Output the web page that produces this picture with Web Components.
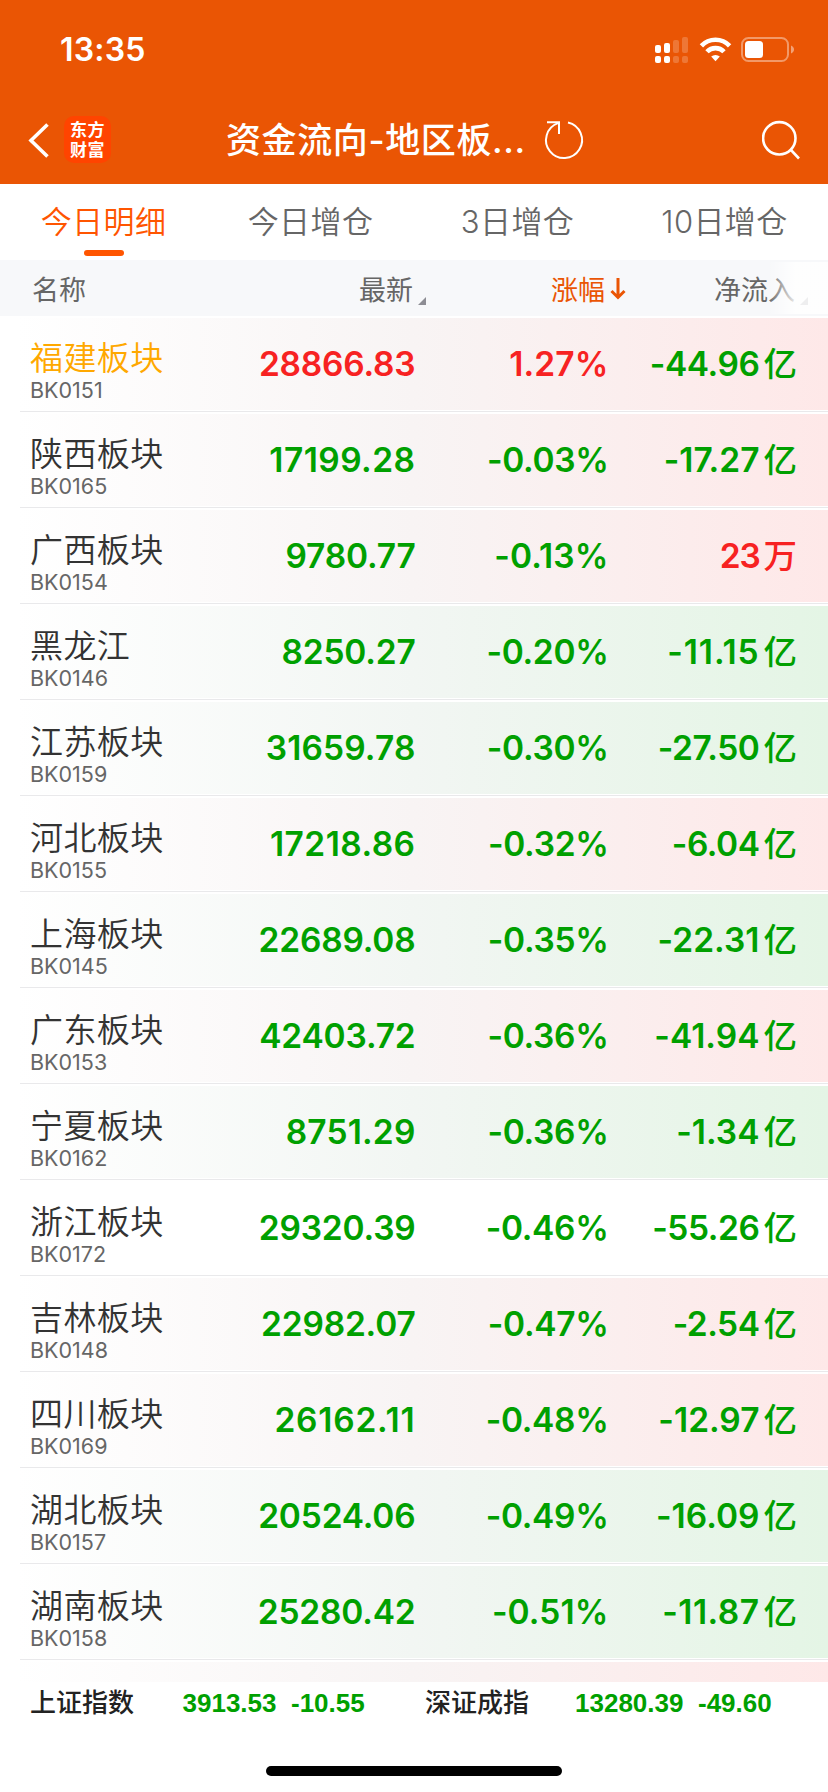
<!DOCTYPE html>
<html lang="zh-CN">
<head>
<meta charset="utf-8">
<title>资金流向</title>
<style>
  body {
    margin: 0;
    width: 828px;
    height: 1792px;
    overflow: hidden;
    background: #fff;
    font-family: Inter, "Noto Sans CJK SC", sans-serif;
  }
</style>
</head>
<body>
<fund-page></fund-page>
<script>
// 根据模板字符串创建 shadow root
function render(el, html) {
  const template = document.createElement('template');
  template.innerHTML = html;
  el.attachShadow({ mode: 'open' }).appendChild(template.content.cloneNode(true));
}

// 状态栏
class StatusBar extends HTMLElement {
  constructor() {
    super();
    render(this, `
      <style>
        :host { display: flex; justify-content: space-between; height: 100px; box-sizing: border-box; padding: 30px 32px 0 60px; color: #fff; }
        .time { font-size: 32px; font-weight: 600; line-height: 40px; letter-spacing: 0.2px; }
        svg { display: block; }
      </style>
      <span class="time">13:35</span>
      <svg width="144" height="40" viewBox="652 30 144 40" fill="#fff">
        <rect x="655" y="45" width="6" height="8" rx="2"/>
        <rect x="664" y="43" width="6" height="10" rx="2"/>
        <rect x="655" y="56" width="6" height="7" rx="2"/>
        <rect x="664" y="56" width="6" height="7" rx="2"/>
        <g opacity="0.2">
          <rect x="673" y="40" width="6" height="13" rx="2"/>
          <rect x="682" y="37" width="6" height="16" rx="2"/>
          <rect x="673" y="56" width="6" height="7" rx="2"/>
          <rect x="682" y="56" width="6" height="7" rx="2"/>
        </g>
        <g fill="none" stroke="#fff" stroke-width="4.6">
          <path d="M701.4 45.8a19.4 19.4 0 0 1 28.2 0"/>
          <path d="M707 51.8a11.6 11.6 0 0 1 17 0"/>
        </g>
        <path d="M711.2 56.6a6.4 6.4 0 0 1 8.6 0l-4.3 4.6z"/>
        <rect x="742" y="38" width="46" height="23" rx="6.5" fill="none" stroke="#fff" stroke-width="2" opacity="0.4"/>
        <rect x="745" y="41" width="18" height="17" rx="3.5"/>
        <path d="M791 45.500c4 1.500 4 6.500 0 8z" opacity="0.45"/>
      </svg>
    `);
  }
}

// 顶部导航
class NavBar extends HTMLElement {
  constructor() {
    super();
    render(this, `
      <style>
        :host { display: grid; grid-template-columns: 64px 162px 311px 225px 1fr; align-items: center; height: 84px; box-sizing: border-box; padding-bottom: 5px; color: #fff; }
        svg { display: block; }
        .logo { width: 47px; height: 47px; border-radius: 10px; background: #ff4400; box-sizing: border-box; padding-top: 5px; font: 700 17px/20px "Liberation Sans", "Noto Sans CJK SC", sans-serif; text-align: center; letter-spacing: 0.5px; }
        .logo div { height: 19.500px; }
        .title { font-size: 35px; font-weight: 500; line-height: 48px; letter-spacing: 0.6px; white-space: nowrap; }
      </style>
      <svg width="64" height="46" viewBox="0 117 64 46"><path d="M47.500 124.500L31 140.500l16.500 16" fill="none" stroke="#fff" stroke-width="3.6"/></svg>
      <div class="logo"><div>东方</div><div>财富</div></div>
      <div class="title"><slot></slot></div>
      <svg width="60" height="46" viewBox="537 117 60 46" fill="none" stroke="#fff" stroke-width="2">
        <path d="M568 122.500A18 18 0 1 1 558 123.100"/>
        <path d="M547 122.200H559V134"/>
      </svg>
      <svg width="46" height="46" viewBox="762 117 46 46" fill="none" stroke="#fff" stroke-width="2.600">
        <circle cx="779.300" cy="138.300" r="16.200"/>
        <path d="M790.500 149.500l8.500 9"/>
      </svg>
    `);
  }
}

class TabItem extends HTMLElement {
  constructor() {
    super();
    render(this, `
      <style>
        :host { display: flex; flex-direction: column; align-items: center; color: #666; }
        .text { font-size: 31px; line-height: 44px; margin-top: 16px; font-weight: 350; letter-spacing: 0.4px; }
        .bar { width: 40px; height: 6px; border-radius: 3px; margin-top: 6px; }
        :host([active]) { color: #ff5500; }
        :host([active]) .bar { background: #ff5500; }
      </style>
      <span class="text"><slot></slot></span>
      <span class="bar"></span>
    `);
  }
}

// 表头
class TableHead extends HTMLElement {
  constructor() {
    super();
    render(this, `
      <style>
        :host { display: grid; grid-template-columns: 32px 327px 192px 163px 1fr; align-items: center; position: relative; height: 56px; background: #f7f8fa; margin-bottom: 2px; color: #666; font-size: 27px; }
        span { display: flex; align-items: center; height: 56px; }
        .tri { margin: 26px 0 0 5px; }
        .sort { color: #ea5504; }
        .sort svg { margin: 1px 0 0 5px; }
        .fade { position: absolute; right: 0; top: 2px; width: 60px; height: 52px; background: linear-gradient(90deg, rgba(255,255,255,0), rgba(255,255,255,0.85) 45%); }
      </style>
      <i></i>
      <span>名称</span>
      <span>最新<svg class="tri" width="8" height="8"><path d="M8 0V8H0z" fill="#8d8d94"/></svg></span>
      <span class="sort">涨幅<svg width="16" height="24"><path d="M8 1V21M1.500 14L8 20.500L14.500 14" fill="none" stroke="#ea5504" stroke-width="3"/></svg></span>
      <span>净流入<svg class="tri" width="8" height="8"><path d="M8 0V8H0z" fill="#8d8d94"/></svg></span>
      <div class="fade"></div>
    `);
  }
}

// 板块行
class BoardRow extends HTMLElement {
  constructor() {
    super();
    render(this, `
      <style>
        :host { display: block; height: 96px; --num: #00a000; }
        .row { display: grid; grid-template-columns: 215px 200.500px 193px 188.500px; height: 92px; }
        .line { height: 1px; margin: 1px 0 2px 20px; background: #e9e9eb; }
        :host([bg=red]) .row { background: linear-gradient(90deg, #fff 2%, #f8f4f4 50%, #fee8e8); }
        :host([bg=green]) .row { background: linear-gradient(90deg, #fff 2%, #f2f6f3 50%, #e4f5e5); }
        .name { padding: 18px 0 0 30px; white-space: nowrap; }
        .title { font-size: 33px; line-height: 44px; letter-spacing: 0.4px; color: #333; font-weight: 350; }
        :host([hot]) .title { color: #ffa800; }
        .code { font-size: 21.500px; line-height: 21px; color: #666; }
        .num { color: var(--num); font-size: 33.500px; font-weight: 580; line-height: 93px; text-align: right; white-space: nowrap; }
        .num.up { color: #f72222; }
        .unit { margin-left: 4px; font-weight: 500; }
      </style>
      <div class="row">
        <div class="name"><div class="title"></div><div class="code"></div></div>
        <div class="num price"></div>
        <div class="num pct"></div>
        <div class="num flow"><span class="val"></span><span class="unit"></span></div>
      </div>
      <div class="line"></div>
    `);
  }

  // 填写数字，数字1较窄，用字距补足宽度
  setNum(selector, text, base) {
    const el = this.shadowRoot.querySelector(selector);
    const ones = text.split('1').length - 1;
    el.textContent = text;
    if (text) el.style.letterSpacing = `${((base + ones * 2.6) / text.length).toFixed(2)}px`;
  }

  // 填充一行的数据
  setData([name, code, price, pct, flow, bg]) {
    const $ = s => this.shadowRoot.querySelector(s);
    if (bg) this.setAttribute('bg', bg);
    $('.title').textContent = name;
    $('.code').textContent = code;
    this.setNum('.price', price, -1.5);
    this.setNum('.pct', pct, -2);
    this.setNum('.val', flow.slice(0, -1), -2.5);
    $('.unit').textContent = flow.slice(-1);
    if (pct && !pct.startsWith('-')) {
      $('.price').classList.add('up');
      $('.pct').classList.add('up');
    }
    if (flow && !flow.startsWith('-')) $('.flow').classList.add('up');
  }
}

class BoardList extends HTMLElement {
  constructor() {
    super();
    render(this, `
      <style>
        :host { display: block; height: 1364px; overflow: hidden; }
      </style>
    `);
    const rows = [
      ['福建板块', 'BK0151', '28866.83', '1.27%', '-44.96亿', 'red'],
      ['陕西板块', 'BK0165', '17199.28', '-0.03%', '-17.27亿', 'red'],
      ['广西板块', 'BK0154', '9780.77', '-0.13%', '23万', 'red'],
      ['黑龙江', 'BK0146', '8250.27', '-0.20%', '-11.15亿', 'green'],
      ['江苏板块', 'BK0159', '31659.78', '-0.30%', '-27.50亿', 'green'],
      ['河北板块', 'BK0155', '17218.86', '-0.32%', '-6.04亿', 'red'],
      ['上海板块', 'BK0145', '22689.08', '-0.35%', '-22.31亿', 'green'],
      ['广东板块', 'BK0153', '42403.72', '-0.36%', '-41.94亿', 'red'],
      ['宁夏板块', 'BK0162', '8751.29', '-0.36%', '-1.34亿', 'green'],
      ['浙江板块', 'BK0172', '29320.39', '-0.46%', '-55.26亿', ''],
      ['吉林板块', 'BK0148', '22982.07', '-0.47%', '-2.54亿', 'red'],
      ['四川板块', 'BK0169', '26162.11', '-0.48%', '-12.97亿', 'red'],
      ['湖北板块', 'BK0157', '20524.06', '-0.49%', '-16.09亿', 'green'],
      ['湖南板块', 'BK0158', '25280.42', '-0.51%', '-11.87亿', 'green'],
      ['', '', '', '', '', 'red'],
    ];
    rows.forEach((data, i) => {
      const row = document.createElement('board-row');
      row.setData(data);
      if (i === 0) row.setAttribute('hot', '');
      this.shadowRoot.appendChild(row);
    });
  }
}

// 底部指数栏
class IndexBar extends HTMLElement {
  constructor() {
    super();
    render(this, `
      <style>
        :host { display: grid; grid-template-columns: 152.500px 108.500px 134px 150px 123px 1fr; padding-left: 30px; height: 84px; line-height: 42px; font-size: 26px; white-space: nowrap; }
        b { font-weight: 500; color: #222; }
        span { font-family: "Liberation Sans", sans-serif; font-weight: 700; color: #00a000; }
      </style>
      <b>上证指数</b><span>3913.53</span><span>-10.55</span>
      <b>深证成指</b><span>13280.39</span><span>-49.60</span>
    `);
  }
}

class FundPage extends HTMLElement {
  constructor() {
    super();
    render(this, `
      <style>
        :host { display: block; }
        header { background: #ea5504; height: 184px; }
        nav { display: grid; grid-template-columns: repeat(4, 207px); height: 76px; }
        .home { width: 296px; height: 10px; border-radius: 5px; background: #000; margin: 0 auto; }
      </style>
      <header>
        <status-bar></status-bar>
        <nav-bar>资金流向-地区板...</nav-bar>
      </header>
      <nav>
        <tab-item active>今日明细</tab-item>
        <tab-item>今日增仓</tab-item>
        <tab-item>3日增仓</tab-item>
        <tab-item>10日增仓</tab-item>
      </nav>
      <table-head></table-head>
      <board-list></board-list>
      <index-bar></index-bar>
      <div class="home"></div>
    `);
  }
}

customElements.define('status-bar', StatusBar);
customElements.define('nav-bar', NavBar);
customElements.define('tab-item', TabItem);
customElements.define('table-head', TableHead);
customElements.define('board-row', BoardRow);
customElements.define('board-list', BoardList);
customElements.define('index-bar', IndexBar);
customElements.define('fund-page', FundPage);
</script>
</body>
</html>
